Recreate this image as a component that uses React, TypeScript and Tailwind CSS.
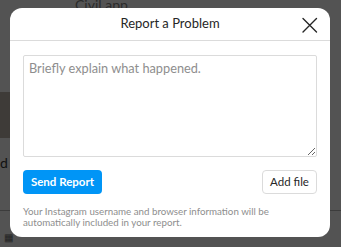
import React from "react";

export default function App() {
  const font = { fontFamily: 'Lato, "Noto Sans", sans-serif' };
  return (
    <div className="relative w-[341px] h-[247px] overflow-hidden bg-[#535353]" style={font}>
      {/* background page dimmed */}
      <div className="absolute left-[75px] top-[-6px] text-[14px] text-[#2a2a2a]">Civil app</div>
      <div className="absolute left-0 top-[92px] w-[12px] h-[46px] bg-[#3e3b38]" />
      <div className="absolute left-0 top-[152px] text-[14px] text-[#111]">d</div>
      <div className="absolute left-0 top-[210px] w-[341px] h-px bg-[#3c3c3c]" />
      <div className="absolute left-[4px] top-[230px] text-[10px] text-[#222]">▦</div>

      {/* modal */}
      <div className="absolute left-[10px] top-[8px] w-[320px] h-[229px] bg-white rounded-[12px] flex flex-col">
        <div className="relative h-[33px] flex items-center justify-center border-b border-[#dbdbdb]">
          <span className="text-[13px] text-[#262626]">Report a Problem</span>
          <button className="absolute right-[12px] top-[8px] w-[18px] h-[18px] flex items-center justify-center">
            <svg width="18" height="18" viewBox="0 0 18 18" fill="none" stroke="#262626" strokeWidth="1.4" strokeLinecap="round">
              <path d="M3 2.5 L16.5 16 M16.5 2.5 L3 16" />
            </svg>
          </button>
        </div>
        <div className="flex flex-col px-[13px] pt-[14px]">
          <textarea
            className="w-[294px] h-[102px] border border-[#dbdbdb] rounded-[2px] px-[5px] pt-[3px] text-[12.75px] text-[#262626] placeholder:text-[#8e8e8e] outline-none"
            style={font}
            placeholder="Briefly explain what happened."
          />
          <div className="flex items-center justify-between mt-[13px]">
            <button className="h-[24px] w-[79px] rounded-[4px] bg-[#0095f6] text-white text-[11.5px] font-bold flex items-center justify-center">
              Send Report
            </button>
            <button className="h-[24px] w-[55px] rounded-[4px] border border-[#dbdbdb] text-[#262626] text-[11.5px] flex items-center justify-center">
              Add file
            </button>
          </div>
          <p className="mt-[12px] text-[9.75px] leading-[11px] text-[#8e8e8e] w-[260px]">
            Your Instagram username and browser information will be automatically included in your report.
          </p>
        </div>
      </div>
    </div>
  );
}
